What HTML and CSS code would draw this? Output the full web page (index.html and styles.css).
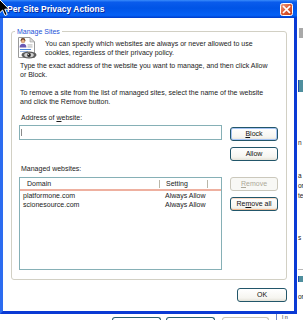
FILE: index.html
```html
<!doctype html>
<html lang="en">
<head>
	<meta charset="UTF-8" />
	<title>Per Site Privacy Actions</title>
	<link rel="stylesheet" href="styles.css">
</head>
<body>
	<section class="screen">
		<div class="dialog">
			<header class="titlebar">
				<span class="title">Per Site Privacy Actions</span>
				<svg class="close" viewBox="0 0 13 13" width="13" height="13">
					<defs>
						<linearGradient id="cg" x1="0" y1="0" x2="1" y2="1">
							<stop offset="0" stop-color="#f0a58a"/>
							<stop offset="0.45" stop-color="#e0603a"/>
							<stop offset="1" stop-color="#c13a14"/>
						</linearGradient>
					</defs>
					<rect x="0.5" y="0.5" width="12" height="12" rx="2" fill="url(#cg)" stroke="#fff"/>
					<path d="M3.6 3.6 L9.4 9.4 M9.4 3.6 L3.6 9.4" stroke="#fff" stroke-width="1.7" stroke-linecap="square"/>
				</svg>
			</header>
			<div class="client">
				<fieldset class="group">
					<legend>Manage Sites</legend>
					<div class="intro">
						<svg class="icon" viewBox="0 0 20 22" width="20" height="22">
							<path d="M1.5 0.5 H13 L17.5 5 V20.5 H1.5 Z" fill="#fff" stroke="#9a9a9a"/>
							<path d="M13 0.5 V5 H17.5 Z" fill="#dcdcdc" stroke="#9a9a9a" stroke-width="0.6"/>
							<circle cx="6" cy="3.4" r="2.4" fill="#6b3e1e"/>
							<circle cx="6" cy="4.3" r="1.7" fill="#ebb48a"/>
							<path d="M2.6 10.5 Q2.6 6.8 6 6.8 Q9.4 6.8 9.4 10.5 Z" fill="#6a58b4"/>
							<rect x="10.5" y="7.5" width="5" height="0.9" fill="#a8a8a8"/>
							<rect x="10.5" y="9.5" width="5" height="0.9" fill="#a8a8a8"/>
							<rect x="3" y="12" width="11" height="1" fill="#4c84d8"/>
							<rect x="3" y="14" width="8" height="1" fill="#9ab6e2"/>
							<ellipse cx="12" cy="18" rx="7.5" ry="3.4" fill="#5b5b5b"/>
							<ellipse cx="12" cy="18" rx="4.8" ry="2.3" fill="#cfcfcf"/>
							<circle cx="12" cy="18" r="1.9" fill="#2a2a2a"/>
							<circle cx="11.3" cy="17.3" r="0.6" fill="#fff"/>
						</svg>
						<p>You can specify which websites are always or never allowed to use<br>cookies, regardless of their privacy policy.</p>
					</div>
					<p class="para">Type the exact address of the website you want to manage, and then click Allow<br>or Block.</p>
					<p class="para">To remove a site from the list of managed sites, select the name of the website<br>and click the Remove button.</p>
					<div class="sites">
						<label class="lbl addr-lbl">Address of <u>w</u>ebsite:</label>
						<div class="input"><span class="caret"></span></div>
						<button class="btn btn-default block-btn"><u>B</u>lock</button>
						<button class="btn allow-btn">Allow</button>
						<label class="lbl managed-lbl">Managed websites:</label>
						<div class="list">
							<div class="list-head">
								<span class="col">Domain</span>
								<span class="col">Setting</span>
								<span></span>
							</div>
							<div class="row"><span>platformone.com</span><span>Always Allow</span></div>
							<div class="row"><span>scionesource.com</span><span>Always Allow</span></div>
						</div>
						<div class="list-btns">
							<button class="btn" disabled><u>R</u>emove</button>
							<button class="btn hot">Re<u>m</u>ove all</button>
						</div>
					</div>
				</fieldset>
				<div class="footer">
					<button class="btn ok">OK</button>
				</div>
			</div>
		</div>
		<!-- window behind the dialog -->
		<div class="side">
			<span class="grey-blk"></span>
			<span class="teal-blk"></span>
			<span class="frag f-n">n</span>
			<span class="frag f-a">a</span>
			<span class="frag">or</span>
			<span class="frag">te</span>
			<span class="frag f-s">s</span>
			<span class="rule"></span>
			<span class="teal-blk teal-low"></span>
			<span class="frag f-or">or</span>
		</div>
		<div class="below">
			<span class="ghost"></span>
			<span class="ghost"></span>
			<span class="ghost ghost-off"></span>
			<span class="vline"></span>
			<span class="tail">l n</span>
		</div>
		<svg class="cursor" viewBox="0 0 12 18" width="12" height="18">
			<path d="M0.5 0.5 V14 L3.6 11 L6 16.5 L8.2 15.5 L5.8 10.2 H10 Z" fill="#000" stroke="#fff" stroke-width="1"/>
		</svg>
	</section>
</body>
</html>
```

FILE: styles.css
```css
body{
	margin: 0;
	font-family: "Liberation Sans", Arial, sans-serif;
	font-size: 7px;
	line-height: 9px;
	color: #1b1b1b;
}
p{
	margin: 0;
}
.screen{
	width: 303px;
	height: 320px;
	overflow: hidden;
	position: relative;
	display: grid;
	grid-template-columns: 297px 6px;
	grid-template-rows: 314px 6px;
	background: #fff;
}
.dialog{
	display: flex;
	flex-direction: column;
}
.titlebar{
	height: 18px;
	display: flex;
	align-items: center;
	padding-left: 7px;
	background: linear-gradient(#3a8cfb 0%, #0a5cec 12%, #0054e6 45%, #0561f5 85%, #0048d8 95%, #003bc8 100%);
}
.title{
	flex: 1;
	color: #fff;
	font-weight: bold;
	font-size: 8.5px;
	text-shadow: 1px 1px 0 #0c2a9a;
}
.close{
	margin-right: 4px;
	display: block;
}
.client{
	flex: 1;
	display: flex;
	flex-direction: column;
	border: 3px solid #0a3ad4;
	border-top: 0;
	border-left-color: #2c6cf0;
	background: #fff;
}
.group{
	margin: 9px 7px 0 8px;
	padding: 1px 7px 9px 8px;
	border: 1px solid #d2d0c4;
	border-radius: 3px;
	min-width: 0;
}
.group legend{
	margin-left: -5px;
	padding: 0 2px;
	color: #1c52d8;
	line-height: 9px;
}
.intro{
	display: flex;
	gap: 8px;
	margin-left: -3px;
}
.icon{
	display: block;
	flex: none;
}
.intro p{
	margin-top: 1.5px;
}
.para{
	margin-top: 2px;
}
.para + .para{
	margin-top: 9px;
}
.sites{
	display: grid;
	grid-template-columns: 203px 48px;
	column-gap: 8px;
	margin: 7px 0 0 -1px;
	align-items: start;
}
.lbl{
	grid-column: 1;
	padding-left: 2px;
}
.addr-lbl{
	grid-row: 1;
}
.input{
	grid-column: 1;
	grid-row: 2;
	margin-top: 3px;
	height: 15px;
	box-sizing: border-box;
	border: 1px solid #86b0b6;
	display: flex;
	align-items: center;
	padding-left: 1px;
}
.caret{
	width: 1px;
	height: 7px;
	background: #8a8a8a;
}
.block-btn{
	grid-column: 2;
	grid-row: 2;
	margin-top: 5px;
}
.allow-btn{
	grid-column: 2;
	grid-row: 3;
	margin-top: 6px;
}
.managed-lbl{
	grid-row: 4;
	margin-top: 3px;
}
.list{
	grid-column: 1;
	grid-row: 5;
	margin-top: 4px;
	height: 93px;
	box-sizing: border-box;
	border: 1px solid #86b0b6;
	color: #222;
}
.list-head{
	display: grid;
	grid-template-columns: 140px 48px 1fr;
	height: 11px;
	border-bottom: 2px solid #eeb0a0;
}
.list-head .col{
	margin-top: 2px;
	height: 8px;
	line-height: 8px;
	border-right: 1px solid #b9b6a8;
}
.list-head .col:first-child{
	padding-left: 7px;
}
.list-head .col + .col{
	padding-left: 6px;
}
.row{
	display: grid;
	grid-template-columns: 140px 48px;
}
.row span:first-child{
	padding-left: 3px;
}
.row span + span{
	padding-left: 5px;
}
.list-btns{
	grid-column: 2;
	grid-row: 5;
	margin-top: 4px;
	display: flex;
	flex-direction: column;
	gap: 6px;
}
.btn{
	font: inherit;
	color: #111;
	width: 48px;
	height: 14px;
	padding: 0;
	line-height: 12px;
	box-sizing: border-box;
	border: 1px solid #22566a;
	border-radius: 3px;
	background: linear-gradient(#fff, #f6f5f0 75%, #e4e2d8);
}
.btn-default{
	box-shadow: inset 0 0 0 1px #a6c4f4;
}
.btn.hot{
	box-shadow: inset 0 -1px 0 #f2b98e, inset 0 1px 0 #fbdcc8;
}
.btn:disabled{
	color: #aca899;
	border-color: #cbc8bc;
	background: #f8f8f5;
}
.footer{
	display: flex;
	justify-content: flex-end;
	padding: 8px 7px 0 0;
}
.btn.ok{
	width: 50px;
}
.side{
	display: flex;
	flex-direction: column;
	align-items: flex-start;
	padding-left: 1px;
	color: #222;
	font-size: 6.5px;
}
.grey-blk{
	margin: 28px 0 0 1px;
	width: 5px;
	height: 10px;
	background: #a9a9a9;
}
.teal-blk{
	margin-top: 42px;
	width: 6px;
	height: 12px;
	background: #4f8f9e;
	border-left: 1px solid #1d4fb0;
}
.frag{
	height: 9px;
	line-height: 9px;
	margin-top: 1px;
}
.f-n{
	margin-top: 46px;
}
.f-a{
	margin-top: 24px;
}
.f-s{
	margin-top: 33px;
}
.rule{
	margin-top: 27px;
	width: 6px;
	height: 1px;
	background: #b8b8b8;
}
.teal-low{
	margin-top: 6px;
	height: 6px;
}
.f-or{
	margin-top: 10px;
}
.below{
	grid-column: 1 / 3;
	display: flex;
	padding-left: 112px;
	gap: 5px;
}
.ghost{
	margin-top: 3px;
	width: 49px;
	height: 8px;
	box-sizing: border-box;
	border: 1px solid #2a5f70;
	border-bottom: 0;
	border-radius: 3px 3px 0 0;
}
.ghost-off{
	margin-left: 2px;
	width: 47px;
	border-color: #c6c3b6;
}
.vline{
	margin-left: 2px;
	width: 1px;
	background: #6d86c4;
}
.tail{
	font-size: 5.5px;
	line-height: 6px;
	color: #333;
}
.cursor{
	position: absolute;
	left: -1px;
	top: -1px;
}
```
